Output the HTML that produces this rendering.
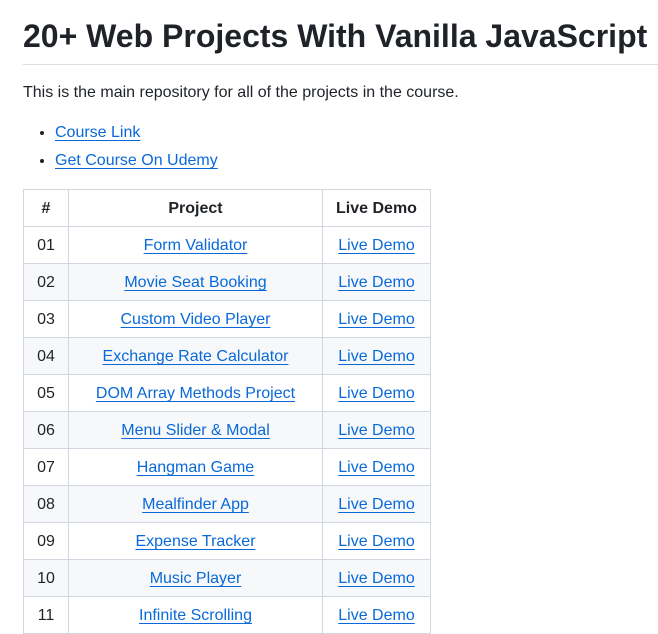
<!DOCTYPE html>
<html><head><style>
body{margin:0;background:#fff;font-family:"Liberation Sans",sans-serif;color:#1f2328;font-size:16px;line-height:1.5}
.w{position:absolute;left:23px;top:0;width:635px}
h1{font-size:32px;font-weight:bold;margin:16px 0 0;padding-bottom:8px;border-bottom:1px solid #d8dee4;line-height:1.25;white-space:nowrap}
p{margin:16px 0 16px}
ul{margin:0 0 16px;padding-left:32px}
li{margin-top:4px}
a{color:#0969da;text-decoration:underline;text-underline-offset:3px}
table{border-collapse:collapse}
td,th{border:1px solid #d0d7de;padding:7px 13px 5px;text-align:center;height:24px}
tr:nth-child(2n+1) td{background:#f6f8fa}
</style></head><body><div class="w">
<h1>20+ Web Projects With Vanilla JavaScript</h1>
<p>This is the main repository for all of the projects in the course.</p>
<ul><li><a>Course Link</a></li><li><a>Get Course On Udemy</a></li></ul>
<table>
<tr><th style="width:18px">#</th><th style="width:227px">Project</th><th style="width:81px">Live Demo</th></tr>
<tr><td>01</td><td><a>Form Validator</a></td><td><a>Live Demo</a></td></tr>
<tr><td>02</td><td><a>Movie Seat Booking</a></td><td><a>Live Demo</a></td></tr>
<tr><td>03</td><td><a>Custom Video Player</a></td><td><a>Live Demo</a></td></tr>
<tr><td>04</td><td><a>Exchange Rate Calculator</a></td><td><a>Live Demo</a></td></tr>
<tr><td>05</td><td><a>DOM Array Methods Project</a></td><td><a>Live Demo</a></td></tr>
<tr><td>06</td><td><a>Menu Slider &amp; Modal</a></td><td><a>Live Demo</a></td></tr>
<tr><td>07</td><td><a>Hangman Game</a></td><td><a>Live Demo</a></td></tr>
<tr><td>08</td><td><a>Mealfinder App</a></td><td><a>Live Demo</a></td></tr>
<tr><td>09</td><td><a>Expense Tracker</a></td><td><a>Live Demo</a></td></tr>
<tr><td>10</td><td><a>Music Player</a></td><td><a>Live Demo</a></td></tr>
<tr><td>11</td><td><a>Infinite Scrolling</a></td><td><a>Live Demo</a></td></tr>
</table>
</div></body></html>
